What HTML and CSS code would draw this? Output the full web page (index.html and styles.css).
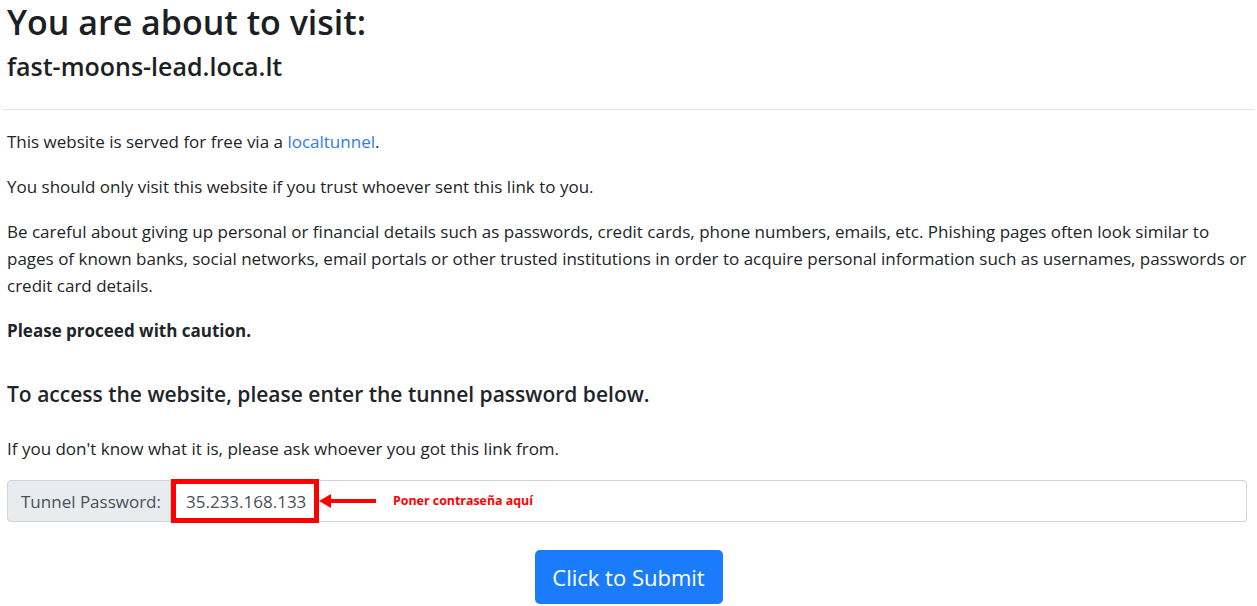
FILE: index.html
```html
<!DOCTYPE html>
<html lang="en">
<head>
<meta charset="utf-8">
<title>localtunnel</title>
<link rel="stylesheet" href="styles.css">
</head>
<body>
<div class="page">
  <header class="head">
    <h1 class="title">You are about to visit:</h1>
    <h2 class="host">fast-moons-lead.loca.lt</h2>
  </header>
  <hr class="rule">
  <div class="body">
    <p class="txt">This website is served for free via a <a class="link" href="#">localtunnel</a>.</p>
    <p class="txt">You should only visit this website if you trust whoever sent this link to you.</p>
    <p class="txt">Be careful about giving up personal or financial details such as passwords, credit cards, phone numbers, emails, etc. Phishing pages often look similar to pages of known banks, social networks, email portals or other trusted institutions in order to acquire personal information such as usernames, passwords or credit card details.</p>
    <p class="txt strong">Please proceed with caution.</p>
    <h3 class="sub">To access the website, please enter the tunnel password below.</h3>
    <p class="txt">If you don't know what it is, please ask whoever you got this link from.</p>
    <form class="form">
      <div class="group">
        <span class="addon">Tunnel Password:</span>
        <div class="field">
          <span class="value">35.233.168.133</span>
          <span class="mark"></span>
          <span class="arrow"><svg width="57" height="14" viewBox="0 0 57 14"><polygon points="0,7 12,0 12,5 57,5 57,9 12,9 12,14" fill="#ff0000"/></svg></span>
          <span class="note">Poner contraseña aquí</span>
        </div>
      </div>
      <div class="actions">
        <button type="button" class="btn">Click to Submit</button>
      </div>
    </form>
  </div>
</div>
</body>
</html>
```
FILE: styles.css
```css
* { box-sizing: border-box; }
html, body { margin: 0; padding: 0; background: #fff; }
body {
  font-family: "Open Sans", "Noto Sans", sans-serif;
  color: #212529;
  font-size: 17px;
  line-height: 27px;
}
.page { padding: 0 3px; }
.head { padding: 0 4px; }
.title {
  margin: 0;
  font-size: 34px;
  font-weight: 600;
  line-height: 44px;
  color: #1c1f23;
}
.host {
  margin: 0;
  font-size: 25px;
  font-weight: 600;
  line-height: 44px;
  color: #1c1f23;
}
.rule {
  margin: 21px 0 0 0;
  border: 0;
  border-top: 1px solid #e1e3e5;
  height: 0;
}
.body { padding: 18px 4px 0 4px; }
.txt { margin: 0 0 18px 0; }
.strong { font-weight: 700; }
.link { color: #2f7bf5; text-decoration: none; }
.sub {
  margin: 35px 0 26px 0;
  font-size: 21px;
  font-weight: 600;
  line-height: 30px;
}
.form { margin: 0; }
.group {
  display: flex;
  height: 42px;
  margin-top: 3px;
  margin-right: 3px;
}
.addon {
  display: flex;
  align-items: center;
  padding: 0 13px;
  background: #e9ecef;
  border: 1px solid #ced4da;
  border-radius: 4px 0 0 4px;
  color: #495057;
  width: 164px;
  white-space: nowrap;
}
.field {
  flex: 1;
  position: relative;
  display: flex;
  align-items: center;
  border: 1px solid #ced4da;
  border-left: 0;
  border-radius: 0 4px 4px 0;
}
.value {
  padding: 0 0 0 15px;
  color: #495057;
  width: 147px;
}
.mark {
  position: absolute;
  left: 0;
  top: -2px;
  width: 148px;
  height: 44px;
  border: 5px solid #ff0000;
}
.arrow {
  display: flex;
  margin-left: 1px;
}
.note {
  margin-left: 17px;
  color: #ff0000;
  font-size: 12.4px;
  font-weight: 700;
  line-height: 16px;
}
.actions {
  display: flex;
  justify-content: center;
  margin-top: 28px;
}
.btn {
  font-family: inherit;
  background: #1a7cfa;
  color: #fff;
  border: 0;
  border-radius: 5px;
  font-size: 22px;
  width: 188px;
  height: 54px;
  cursor: pointer;
}
```
